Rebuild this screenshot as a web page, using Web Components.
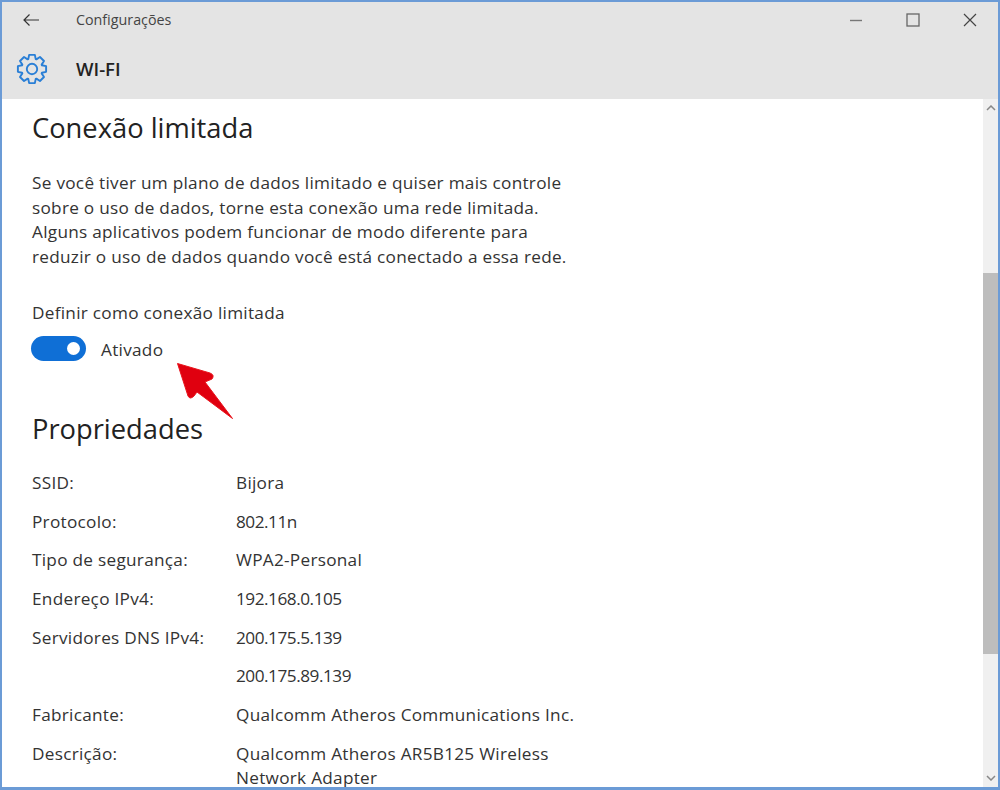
<!DOCTYPE html>
<html lang="pt">
<head>
<meta charset="utf-8">
<title>Configurações</title>
<style>
  html, body { margin: 0; height: 100%; background: #fff; overflow: hidden; }
  body { font-family: "Open Sans", "Noto Sans", sans-serif; color: #2b2b2b; }
</style>
</head>
<body>
<settings-window>
  <title-bar slot="top" caption="Configurações"></title-bar>
  <page-header slot="top" caption="WI-FI"></page-header>
  <page-section caption="Conexão limitada">
    <p class="para">Se você tiver um plano de dados limitado e quiser mais controle<br>sobre o uso de dados, torne esta conexão uma rede limitada.<br>Alguns aplicativos podem funcionar de modo diferente para<br>reduzir o uso de dados quando você está conectado a essa rede.</p>
    <toggle-field label="Definir como conexão limitada" state="Ativado"></toggle-field>
  </page-section>
  <page-section caption="Propriedades" class="props">
    <prop-row name="SSID:">Bijora</prop-row>
    <prop-row name="Protocolo:" numeric>802.11n</prop-row>
    <prop-row name="Tipo de segurança:">WPA2-Personal</prop-row>
    <prop-row name="Endereço IPv4:" numeric>192.168.0.105</prop-row>
    <prop-row name="Servidores DNS IPv4:" numeric>200.175.5.139</prop-row>
    <prop-row numeric>200.175.89.139</prop-row>
    <prop-row name="Fabricante:">Qualcomm Atheros Communications Inc.</prop-row>
    <prop-row name="Descrição:">Qualcomm Atheros AR5B125 Wireless<br>Network Adapter</prop-row>
  </page-section>
</settings-window>

<script>
(function () {
  "use strict";

  // contorno da engrenagem: 8 dentes em volta do centro (16,16)
  function gearPath() {
    let d = "";
    for (let i = 0; i < 8; i++) {
      const a = (i * Math.PI) / 4;
      [[10.6, -0.36], [14.4, -0.2], [14.4, 0.2], [10.6, 0.36]].forEach(([r, o], j) => {
        const x = 16 + r * Math.sin(a + o);
        const y = 16 - r * Math.cos(a + o);
        d += (i === 0 && j === 0 ? "M" : "L") + x.toFixed(2) + " " + y.toFixed(2);
      });
    }
    return d + "Z";
  }

  class SettingsWindow extends HTMLElement {
    constructor() {
      super();
      this.attachShadow({ mode: "open" });
      this.shadowRoot.innerHTML = `
        <style>
          :host {
            display: flex;
            flex-direction: column;
            box-sizing: border-box;
            height: 790px;
            position: relative;
            border: solid #6b9bd6;
            border-width: 2px 2px 3px 2px;
            overflow: hidden;
          }
          .body { flex: 1; display: flex; min-height: 0; }
          .content { flex: 1; min-width: 0; overflow: hidden; padding: 0 0 0 30px; }
          .arrow { position: absolute; left: 173px; top: 358px; }
        </style>
        <slot name="top"></slot>
        <div class="body">
          <div class="content"><slot></slot></div>
          <scroll-rail></scroll-rail>
        </div>
        <svg class="arrow" width="62" height="64" viewBox="0 0 62 64">
          <path d="M2.5 3.5 L35 13 Q40 15 37 19 L30 22 L57.5 58.5 L22 32 L19 36 Q15 40 13 36 Z" fill="#e0000f" stroke="#e8141c" stroke-width="1" stroke-linejoin="round"/>
        </svg>
      `;
    }
  }

  class TitleBar extends HTMLElement {
    constructor() {
      super();
      this.attachShadow({ mode: "open" });
      this.shadowRoot.innerHTML = `
        <style>
          :host {
            display: flex;
            align-items: center;
            height: 36px;
            background: #e4e4e4;
            color: #444;
            font-size: 14.3px;
          }
          .back { width: 20px; margin: 0 34px 0 20px; display: flex; }
          .text { flex: 1; padding-bottom: 2px; }
          .btn { width: 57px; display: flex; justify-content: center; }
        </style>
        <span class="back">
          <svg width="18" height="14" viewBox="0 0 18 14" fill="none" stroke="#333" stroke-width="1.2"><path d="M17 7H2M7.5 1.5 2 7l5.5 5.5"/></svg>
        </span>
        <span class="text">${this.getAttribute("caption")}</span>
        <span class="btn"><svg width="14" height="14" viewBox="0 0 14 14" stroke="#777" stroke-width="1.4"><path d="M1 7.5h12"/></svg></span>
        <span class="btn"><svg width="14" height="14" viewBox="0 0 14 14" fill="none" stroke="#666" stroke-width="1.3"><rect x="1" y="1" width="12" height="12"/></svg></span>
        <span class="btn"><svg width="14" height="14" viewBox="0 0 14 14" stroke="#444" stroke-width="1.2"><path d="M1 1l12 12M13 1 1 13"/></svg></span>
      `;
    }
  }

  class PageHeader extends HTMLElement {
    constructor() {
      super();
      this.attachShadow({ mode: "open" });
      this.shadowRoot.innerHTML = `
        <style>
          :host {
            display: flex;
            align-items: center;
            height: 61px;
            background: #e4e4e4;
          }
          svg { margin: 0 28px 0 14px; }
          .text { font-size: 18.5px; font-weight: 600; color: #222; }
        </style>
        <svg width="32" height="32" viewBox="0 0 32 32" fill="none" stroke="#2a7fd6" stroke-width="1.9" stroke-linejoin="round">
          <circle cx="16" cy="16" r="5.2"/>
          <path d="${gearPath()}"/>
        </svg>
        <span class="text">${this.getAttribute("caption")}</span>
      `;
    }
  }

  class PageSection extends HTMLElement {
    constructor() {
      super();
      this.attachShadow({ mode: "open" });
      this.shadowRoot.innerHTML = `
        <style>
          :host {
            display: block;
            font-size: 17.2px;
            letter-spacing: .28px;
            line-height: 24.6px;
            color: #333;
          }
          :host(.props) { margin-top: 48.5px; }
          h2 {
            margin: 0;
            padding-top: 9px;
            font-size: 27.3px;
            line-height: 40px;
            font-weight: 400;
            letter-spacing: 0;
            color: #222;
          }
          ::slotted(.para) { margin: 23px 0 32px; }
          :host(.props) h2 { padding-top: 0; margin-bottom: 21.5px; }
        </style>
        <h2>${this.getAttribute("caption")}</h2>
        <slot></slot>
      `;
    }
  }

  class ToggleField extends HTMLElement {
    constructor() {
      super();
      this.attachShadow({ mode: "open" });
      this.shadowRoot.innerHTML = `
        <style>
          :host { display: block; }
          .row { display: flex; align-items: center; margin: 10px 0 0 -1px; }
          .track {
            box-sizing: border-box;
            width: 55px;
            height: 25px;
            border-radius: 13px;
            background: #0f6fd6;
            display: flex;
            align-items: center;
            justify-content: flex-end;
            padding-right: 6px;
            margin-right: 15px;
          }
          .knob { width: 13px; height: 13px; border-radius: 50%; background: #fff; }
          .state { position: relative; top: 2px; }
        </style>
        <div>${this.getAttribute("label")}</div>
        <div class="row"><span class="track"><span class="knob"></span></span><span class="state">${this.getAttribute("state")}</span></div>
      `;
    }
  }

  class PropRow extends HTMLElement {
    constructor() {
      super();
      this.attachShadow({ mode: "open" });
      this.shadowRoot.innerHTML = `
        <style>
          :host {
            display: grid;
            grid-template-columns: 204px 1fr;
            margin-bottom: 14.1px;
          }
          :host([numeric]) .value { letter-spacing: -.47px; }
        </style>
        <span>${this.getAttribute("name") || ""}</span>
        <span class="value"><slot></slot></span>
      `;
    }
  }

  class ScrollRail extends HTMLElement {
    constructor() {
      super();
      this.attachShadow({ mode: "open" });
      this.shadowRoot.innerHTML = `
        <style>
          :host {
            display: flex;
            flex-direction: column;
            width: 15px;
            background: #f0f0f0;
          }
          .end { height: 18px; display: flex; align-items: center; justify-content: center; }
          .gap { height: 156px; }
          .thumb { height: 381px; background: #bdbdbd; }
          .rest { flex: 1; }
        </style>
        <div class="end"><svg width="10" height="6" viewBox="0 0 10 6" fill="none" stroke="#888" stroke-width="1.5"><path d="M1 5l4-4 4 4"/></svg></div>
        <div class="gap"></div>
        <div class="thumb"></div>
        <div class="rest"></div>
        <div class="end"><svg width="10" height="6" viewBox="0 0 10 6" fill="none" stroke="#888" stroke-width="1.5"><path d="M1 1l4 4 4-4"/></svg></div>
      `;
    }
  }

  customElements.define("settings-window", SettingsWindow);
  customElements.define("title-bar", TitleBar);
  customElements.define("page-header", PageHeader);
  customElements.define("page-section", PageSection);
  customElements.define("toggle-field", ToggleField);
  customElements.define("prop-row", PropRow);
  customElements.define("scroll-rail", ScrollRail);
})();
</script>
</body>
</html>
